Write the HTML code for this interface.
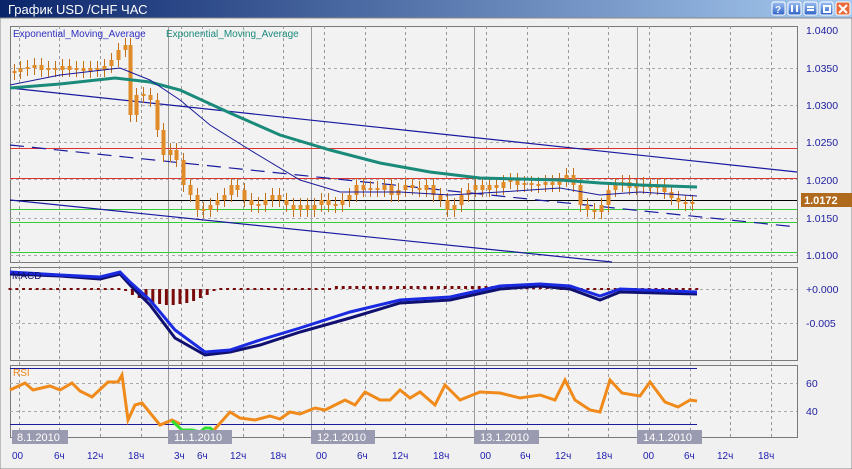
<!DOCTYPE html>
<html><head><meta charset="utf-8"><style>
html,body{margin:0;padding:0;width:852px;height:469px;overflow:hidden;background:#f0f0f0;font-family:"Liberation Sans","DejaVu Sans",sans-serif}
svg{display:block}
</style></head><body>
<svg id="s" width="852" height="469" viewBox="0 0 852 469" xmlns="http://www.w3.org/2000/svg" font-family="Liberation Sans, DejaVu Sans, sans-serif">
<defs><linearGradient id="tb" x1="0" x2="1"><stop offset="0" stop-color="#0a246a"/><stop offset="1" stop-color="#a6caf0"/></linearGradient>
<linearGradient id="bt" x1="0" y1="0" x2="0" y2="1"><stop offset="0" stop-color="#9ec0f0"/><stop offset="1" stop-color="#2e62c8"/></linearGradient></defs>
<rect width="852" height="469" fill="#f0f0f0"/>
<rect x="0" y="0" width="852" height="18" fill="url(#tb)"/>
<text x="8" y="14" font-size="13" fill="#fff">График USD /CHF  ЧАС</text>
<g stroke="#fff" stroke-width="1">
<rect x="772" y="2" width="13" height="13" rx="2" fill="url(#bt)"/><rect x="788" y="2" width="13" height="13" rx="2" fill="url(#bt)"/><rect x="804" y="2" width="13" height="13" rx="2" fill="url(#bt)"/><rect x="820" y="2" width="13" height="13" rx="2" fill="url(#bt)"/><rect x="836" y="2" width="14" height="13" rx="2" fill="#e86a3a"/>
</g>
<text x="775" y="13" font-size="10" font-weight="bold" fill="#fff">?</text>
<path d="M792 5v7M797 5v7M807 7h7M807 10h7M824 6h6v6h-6z" stroke="#fff" stroke-width="2" fill="none"/>
<path d="M839 5l8 8M847 5l-8 8" stroke="#fff" stroke-width="2"/>
<rect x="0" y="18" width="852" height="451" fill="none" stroke="#888"/>
<!-- panels -->
<g fill="#f2f2f2" stroke="#7a7a7a">
<rect x="10.5" y="26.5" width="787" height="236"/>
<rect x="10.5" y="267.5" width="787" height="93"/>
<rect x="10.5" y="365.5" width="787" height="72"/>
</g>
<!-- vertical grid -->
<g stroke="#999" stroke-dasharray="3,3" stroke-width="1" id="vg"></g>
<g stroke="#999" stroke-width="1"><path d="M168.5 26v412M311.5 26v412M474.5 26v412M637.5 26v412"/></g>
<!-- horizontal grid -->
<g stroke="#aaa" stroke-dasharray="3,3"><path d="M10 68.5h787M10 105.5h787M10 142.5h787M10 179.5h787M10 218.5h787M10 255.5h787M10 289.5h787M10 323.5h787M10 383.5h787M10 411.5h787"/></g>
<!-- horizontal levels -->
<path d="M10 148.5h787" stroke="#d33" /><path d="M10 178.5h787" stroke="#d33"/>
<path d="M10 200.5h787" stroke="#000"/>
<path d="M10 209.5h787M10 222.5h787M10 252.5h787" stroke="#3c3"/>
<path d="M10 88L797 172" stroke="#1a1aa0" stroke-width="1.2"/>
<path d="M10 145L797 227" stroke="#1a1aa0" stroke-width="1.2" stroke-dasharray="14,8"/>
<path d="M10 200L612 262" stroke="#1a1aa0" stroke-width="1.2"/>
<g id="cd"></g>
<polyline fill="none" stroke="#1a8a7a" stroke-width="3" points="10,88 60,84 115,78 150,82 180,90 230,113 280,135 330,150 380,163 430,172 480,178 560,180 600,183 640,185 697,187"/>
<polyline fill="none" stroke="#1a1a9a" stroke-width="1" points="10,85 60,75 120,68 150,80 180,100 210,125 250,150 300,180 340,192 400,192 450,195 500,192 560,188 600,195 640,192 697,196"/>
<text x="13" y="37" font-size="10" fill="#3030c0">Exponential_Moving_Average</text>
<text x="166" y="37" font-size="10" fill="#1a8a7a">Exponential_Moving_Average</text>
<!-- price labels -->
<g font-size="10.5" fill="#2020a0">
<text x="806" y="34">1.0400</text><text x="806" y="72">1.0350</text><text x="806" y="109">1.0300</text><text x="806" y="146">1.0250</text><text x="806" y="184">1.0200</text><text x="806" y="222">1.0150</text><text x="806" y="259">1.0100</text>
<text x="806" y="293">+0.000</text><text x="806" y="327">-0.005</text>
<text x="806" y="387">60</text><text x="806" y="415">40</text>
</g>
<rect x="801" y="193" width="51" height="14" fill="#b06a1e"/>
<text x="804" y="204" font-size="11" font-weight="bold" fill="#fff">1.0172</text>
<!-- MACD -->
<g id="mh"></g>
<polyline fill="none" stroke="#101070" stroke-width="3" points="10,274 60,276 100,279 120,274 130,285 150,305 175,338 205,355 230,352 260,345 300,332 350,318 400,303 450,300 500,289 540,286 570,289 600,300 620,292 697,294"/>
<polyline fill="none" stroke="#1a2ae0" stroke-width="3" points="10,272 60,275 100,277 120,272 130,282 150,300 175,330 205,352 230,350 260,340 300,328 350,312 400,300 450,297 500,286 540,284 570,286 600,296 620,289 697,292"/>
<text x="12" y="279" font-size="10" fill="#101070">MACD</text>
<!-- RSI -->
<path d="M10 368.5h687M10 424.5h687" stroke="#1a1aa0"/>
<polyline fill="none" stroke="#f08a1a" stroke-width="3" points="10,390 25,383 33,390 50,386 60,390 72,383 80,391 92,397 108,382 118,382 122,375 128,420 135,405 142,403 160,425 172,420 180,424"/>
<polyline fill="none" stroke="#30e030" stroke-width="3" points="172,421 182,430 192,430 200,432 205,428 210,428 214,431"/>
<polyline fill="none" stroke="#f08a1a" stroke-width="3" points="214,430 230,412 240,418 255,420 270,416 280,419 290,412 300,414 315,408 325,410 345,400 355,405 365,392 380,400 390,400 400,390 410,398 420,392 435,405 445,385 460,400 480,392 500,393 520,398 540,395 555,400 565,380 575,400 590,410 600,412 610,380 622,393 640,396 650,382 665,402 678,407 690,400 697,401"/>
<text x="13" y="376" font-size="10" fill="#f08a1a">RSI</text>
<!-- dates -->
<g fill="#9a9ab0"><rect x="12" y="430" width="56" height="14"/><rect x="168" y="430" width="64" height="14"/><rect x="311" y="430" width="64" height="14"/><rect x="474" y="430" width="65" height="14"/><rect x="637" y="430" width="65" height="14"/></g>
<g font-size="11" fill="#fff"><text x="17" y="441">8.1.2010</text><text x="174" y="441">11.1.2010</text><text x="317" y="441">12.1.2010</text><text x="480" y="441">13.1.2010</text><text x="643" y="441">14.1.2010</text></g>
<g font-size="10" fill="#2020b0">
<text x="12" y="459">00</text><text x="54" y="459">6ч</text><text x="87" y="459">12ч</text><text x="128" y="459">18ч</text><text x="174" y="459">3ч</text><text x="197" y="459">6ч</text><text x="230" y="459">12ч</text><text x="270" y="459">18ч</text><text x="316" y="459">00</text><text x="357" y="459">6ч</text><text x="392" y="459">12ч</text><text x="433" y="459">18ч</text><text x="480" y="459">00</text><text x="520" y="459">6ч</text><text x="555" y="459">12ч</text><text x="596" y="459">18ч</text><text x="643" y="459">00</text><text x="684" y="459">6ч</text><text x="717" y="459">12ч</text><text x="758" y="459">18ч</text>
</g>
</svg>
<script>
var NS="http://www.w3.org/2000/svg";
function el(t,a,p){var e=document.createElementNS(NS,t);for(var k in a)e.setAttribute(k,a[k]);p.appendChild(e);return e;}
var vg=document.getElementById("vg"),d="";
[19,59,100,141,181,202,243,283,324,365,405,446,486,527,568,608,649,690,730,771].forEach(function(x){d+="M"+(x+.5)+" 26v412";});
el("path",{d:d},vg);
var pts=[[14,72],[20,68],[27,68],[34,65],[41,70],[48,68],[55,70],[62,66],[69,70],[76,68],[83,71],[90,68],[97,70],[104,66],[111,60],[118,50],[125,45],[130,115],[136,95],[143,95],[150,100],[157,130],[163,155],[170,150],[176,160],[183,185],[190,195],[197,210],[203,210],[210,205],[217,200],[224,195],[231,185],[237,190],[244,200],[251,205],[258,205],[265,200],[272,195],[279,200],[286,205],[293,210],[300,205],[307,210],[314,205],[321,200],[328,205],[335,205],[342,200],[349,195],[356,185],[363,190],[370,188],[377,190],[384,185],[391,195],[398,190],[405,185],[412,188],[419,190],[426,185],[433,195],[440,200],[447,210],[454,205],[461,195],[468,190],[475,185],[482,190],[489,185],[496,188],[503,182],[510,180],[517,185],[524,183],[531,185],[538,185],[545,182],[552,185],[559,180],[566,175],[573,185],[580,205],[587,210],[594,212],[601,205],[608,190],[615,185],[622,182],[629,188],[636,186],[643,185],[650,188],[657,185],[664,192],[671,198],[678,202],[685,204],[692,202]];
var cd=document.getElementById("cd"),w="",b="",mh="",dots="";
pts.forEach(function(p,i){var x=p[0]+.5,y=p[1],pr=i?pts[i-1][1]:y;var t=Math.min(y,pr),bo=Math.max(y,pr);if(bo-t<2){t-=1;bo+=1;}
w+="M"+x+" "+(t-7)+"V"+(bo+7);b+="M"+x+" "+t+"V"+bo;});
el("path",{d:w,stroke:"#c07018","stroke-width":1,fill:"none"},cd);
el("path",{d:b,stroke:"#e08a28","stroke-width":4,fill:"none"},cd);
var m=document.getElementById("mh");
for(var x=10;x<=697;x+=6.8){var h=1;if(x>125&&x<215){h=Math.round(14*Math.sin((x-125)/90*Math.PI))+2;}else if(x>330&&x<560){h=-3;}
if(h>1)mh+="M"+x+" 289V"+(289+h);else if(h<0)mh+="M"+x+" "+(289+h)+"V289";else mh+="M"+x+" 288V290";}
el("path",{d:mh,stroke:"#7a0a0a","stroke-width":3,fill:"none"},m);
</script>
</body></html>
